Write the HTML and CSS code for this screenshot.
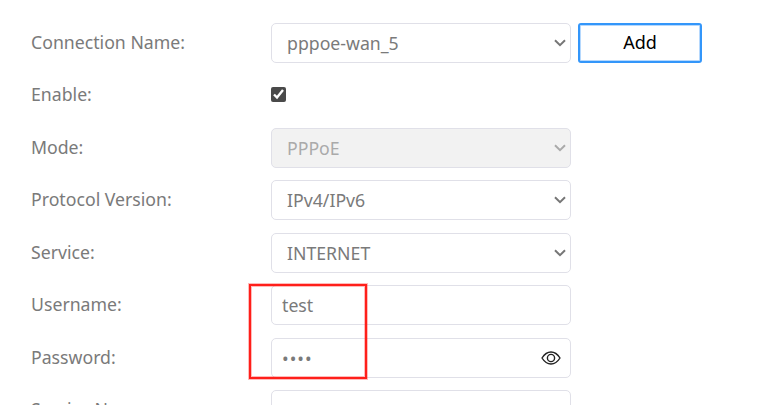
FILE: index.html
```html
<!DOCTYPE html>
<html>
<head>
    <meta charset="UTF-8">
    <title>WAN Settings</title>
    <link rel="stylesheet" href="styles.css">
</head>
<body>
    <form class="wan-form">
        <div class="row">
            <label for="conn">Connection Name:</label>
            <select id="conn" class="field"><option>pppoe-wan_5</option></select>
            <button type="button" class="add-btn">Add</button>
        </div>
        <div class="row">
            <label for="enable">Enable:</label>
            <input type="checkbox" id="enable" class="check" checked>
        </div>
        <div class="row">
            <label for="mode">Mode:</label>
            <select id="mode" class="field" disabled><option>PPPoE</option></select>
        </div>
        <div class="row">
            <label for="proto">Protocol Version:</label>
            <select id="proto" class="field"><option>IPv4/IPv6</option></select>
        </div>
        <div class="row">
            <label for="service">Service:</label>
            <select id="service" class="field"><option>INTERNET</option></select>
        </div>
        <div class="row">
            <label for="user">Username:</label>
            <input type="text" id="user" class="field text" value="test">
        </div>
        <div class="row">
            <label for="pass">Password:</label>
            <div class="pass-wrap">
                <input type="password" id="pass" class="field text secret" value="test">
                <svg class="eye" width="20" height="14" viewBox="0 0 20 14" fill="none" stroke="#222" stroke-width="1.4">
                    <path d="M1 7C3.400 3.200 6.400 1 10 1s6.600 2.200 9 6c-2.400 3.800-5.400 6-9 6S3.400 10.800 1 7z"/>
                    <circle cx="10" cy="7" r="3.600"/>
                </svg>
            </div>
        </div>
        <div class="row">
            <label for="svc">Service Name:</label>
            <input type="text" id="svc" class="field text">
        </div>
    </form>
    <div class="highlight"></div>
</body>
</html>
```

FILE: styles.css
```css
html, body {
    height: 405px;
    overflow: hidden;
}
body {
    position: relative;
    margin: 0;
    background: #fff;
    font-family: 'Noto Sans', 'Open Sans', sans-serif;
    font-size: 17.7px;
    color: #7a7a7a;
}
.wan-form {
    display: flex;
    flex-direction: column;
    gap: 12.5px;
    padding: 22.9px 0 0 31px;
}
.row {
    display: flex;
    align-items: center;
    height: 40px;
    flex-shrink: 0;
}
.row label {
    width: 240px;
    flex-shrink: 0;
    padding-bottom: 2px;
}
.field {
    width: 300px;
    height: 40px;
    box-sizing: border-box;
    border: 1px solid #e0e0e8;
    border-radius: 5px;
    background-color: #fff;
    color: #7a7a7a;
    font: inherit;
    padding: 0 11px;
    outline: none;
}
.text {
    padding: 0 10px;
}
.secret {
    letter-spacing: 1px;
}
select.field {
    appearance: none;
    padding-left: 15px;
    background-image: url("data:image/svg+xml,%3Csvg xmlns='http://www.w3.org/2000/svg' width='12' height='8'%3E%3Cpath d='M1 1.200l5 5 5-5' fill='none' stroke='%23777' stroke-width='2'/%3E%3C/svg%3E");
    background-repeat: no-repeat;
    background-position: right 4px center;
}
select.field:disabled {
    background-color: #f2f2f2;
    background-image: url("data:image/svg+xml,%3Csvg xmlns='http://www.w3.org/2000/svg' width='12' height='8'%3E%3Cpath d='M1 1.200l5 5 5-5' fill='none' stroke='%23aaa' stroke-width='2'/%3E%3C/svg%3E");
    color: #aaa;
    opacity: 1;
}
.add-btn {
    width: 124px;
    height: 40px;
    margin-left: 7px;
    padding: 0 0 2px;
    box-sizing: border-box;
    border: 2px solid #3396fa;
    border-radius: 3px;
    box-shadow: inset 0 0 0 1px #b5d8fd;
    background: #fff;
    color: #000;
    font: inherit;
    font-size: 18px;
}
.check {
    width: 15px;
    height: 15px;
    margin: 0 0 1px;
    accent-color: #4a4a4a;
}
.pass-wrap {
    position: relative;
    width: 300px;
    height: 40px;
}
.eye {
    position: absolute;
    right: 10px;
    top: 13px;
}
.highlight {
    position: absolute;
    left: 249px;
    top: 284px;
    width: 118px;
    height: 95px;
    box-sizing: border-box;
    border: 2px solid #ff1f1a;
    box-shadow: 0 0 0 1px rgba(255, 31, 26, 0.3), inset 0 0 0 1px rgba(255, 31, 26, 0.3);
}
```
